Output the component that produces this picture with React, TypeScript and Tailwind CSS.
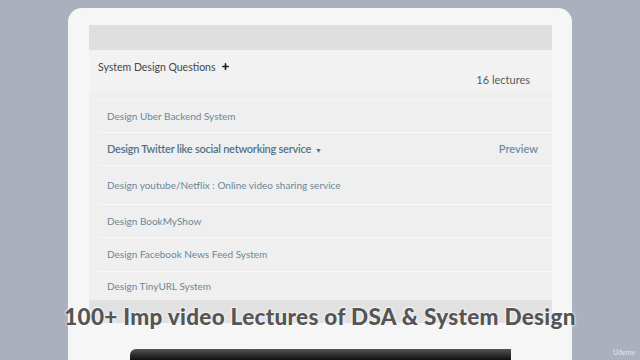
import { Plus } from 'lucide-react'

const lectures = [
  { title: 'Design Uber Backend System', h: 'h-[33px]' },
  { title: 'Design Twitter like social networking service', h: 'h-[33px]', open: true },
  { title: 'Design youtube/Netflix : Online video sharing service', h: 'h-[39px]' },
  { title: 'Design BookMyShow', h: 'h-[33px]' },
  { title: 'Design Facebook News Feed System', h: 'h-[34px]' },
  { title: 'Design TinyURL System', h: 'h-[28px]', last: true },
]

export default function App() {
  return (
    <div className="relative h-[360px] w-[640px] overflow-hidden bg-[#aab0be] font-['Lato',sans-serif]">
      <div className="flex h-full">
        {/* Laptop frame */}
        <div className="ml-[68px] mt-[8px] flex w-[504px] flex-col rounded-t-[14px] bg-[#f6f6f6] pl-[21px] pr-[20px] pt-[17px]">
          {/* Screen */}
          <div className="flex h-[298px] flex-col bg-[#efefef]">
            <div className="h-[25px] shrink-0 bg-[#dfdfdf]" />
            <div className="flex h-[42px] shrink-0 justify-between bg-[#f2f2f2] pl-[9px] pr-[22px]">
              <div className="flex items-start gap-[5px] pt-[10px] text-[10.5px] text-[#454545]">
                <span>System Design Questions</span>
                <Plus className="mt-[2px] h-[9px] w-[9px] text-[#222]" strokeWidth={4.5} />
              </div>
              <div className="pt-[22px] text-[11px] text-[#5a5a5a]">16 lectures</div>
            </div>
            <div className="ml-[9px] h-[8px] shrink-0 border-b border-[#f6f6f6]" />
            <div className="ml-[9px] flex flex-col">
              {lectures.map((l) => (
                <div
                  key={l.title}
                  className={`flex ${l.h} items-center justify-between ${l.last ? '' : 'border-b border-[#f8f8f8]'} pl-[9px] pr-[14px]`}
                >
                  <span
                    className={
                      l.open
                        ? 'text-[11px] font-semibold tracking-[-0.25px] text-[#537386]'
                        : 'text-[10px] text-[#6b8797]'
                    }
                  >
                    {l.title}
                    {l.open && <span className="ml-[4px] text-[7px]">▼</span>}
                  </span>
                  {l.open && <span className="text-[11px] font-semibold text-[#6f8da0]">Preview</span>}
                </div>
              ))}
            </div>
            <div className="mt-auto h-[23px] bg-[#e1e1e1]" />
          </div>
          <div className="h-[26px] shrink-0" />
          <div className="mx-[41px] h-[11px] rounded-tl-[6px] bg-gradient-to-b from-[#555] to-[#111]" />
        </div>
      </div>

      {/* Caption overlay */}
      <div className="absolute left-[60px] top-[303px] w-[520px] text-center text-[22.5px] font-black leading-[28px] tracking-[0.3px] text-[#555] [text-shadow:0_0_3px_#fff,0_0_2px_#fff]">
        100+ Imp video Lectures of DSA &amp; System Design
      </div>

      <div className="absolute right-[5px] bottom-[3px] text-[7px] text-[#e8e8ee]">Udemy</div>
    </div>
  )
}
